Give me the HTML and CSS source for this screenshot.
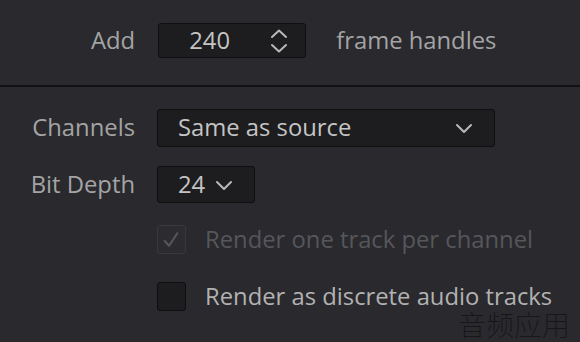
FILE: index.html
```html
<!DOCTYPE html>
<html lang="en">
<head>
<meta charset="utf-8">
<link rel="stylesheet" href="styles.css">
</head>
<body>
<div class="panel">
  <div class="handles-row">
    <span class="label">Add</span>
    <div class="box spin">
      <span class="value">240</span>
      <svg class="spin-icon" width="18" height="28" viewBox="0 0 18 28">
        <path d="M2 10 L9 3.5 L16 10" fill="none" stroke="#b8b8b8" stroke-width="2" stroke-linecap="round" stroke-linejoin="round"/>
        <path d="M2 18 L9 24.5 L16 18" fill="none" stroke="#b8b8b8" stroke-width="2" stroke-linecap="round" stroke-linejoin="round"/>
      </svg>
    </div>
    <span class="label">frame handles</span>
  </div>
  <div class="separator"></div>
  <div class="form">
    <span class="label right">Channels</span>
    <div class="box select wide">
      <span class="value">Same as source</span>
      <svg class="chev" width="18" height="12" viewBox="0 0 18 12">
        <path d="M2 3 L9 10 L16 3" fill="none" stroke="#b8b8b8" stroke-width="2" stroke-linecap="round" stroke-linejoin="round"/>
      </svg>
    </div>
    <span class="label right">Bit Depth</span>
    <div class="box select narrow">
      <span class="value">24</span>
      <svg class="chev" width="18" height="12" viewBox="0 0 18 12">
        <path d="M2 3 L9 10 L16 3" fill="none" stroke="#b8b8b8" stroke-width="2" stroke-linecap="round" stroke-linejoin="round"/>
      </svg>
    </div>
    <span></span>
    <div class="check-row disabled first">
      <span class="checkbox checked">
        <svg width="28" height="28" viewBox="0 0 28 28">
          <path d="M7 15 L11.5 20 L20 7" fill="none" stroke="#55555a" stroke-width="2.2" stroke-linecap="round" stroke-linejoin="round"/>
        </svg>
      </span>
      <span class="check-label">Render one track per channel</span>
    </div>
    <span></span>
    <div class="check-row second">
      <span class="checkbox"></span>
      <span class="check-label">Render as discrete audio tracks</span>
    </div>
  </div>
  <div class="watermark">音频应用</div>
</div>
</body>
</html>
```

FILE: styles.css
```css
html, body {
  margin: 0;
  padding: 0;
  background: #29292e;
}
.panel {
  width: 580px;
  height: 342px;
  position: relative;
  overflow: hidden;
  font-family: "Open Sans", "Liberation Sans", sans-serif;
  font-size: 23.8px;
  color: #a6a6a6;
}
.handles-row {
  display: flex;
  align-items: center;
  padding: 23px 0 0 91px;
  height: 35px;
}
.handles-row .box {
  margin: 0 30px 0 23px;
}
.label {
  color: #a4a4a4;
  line-height: 1;
  white-space: nowrap;
}
.box {
  box-sizing: border-box;
  background: #1d1d1f;
  border: 1.5px solid #0f0f10;
  border-radius: 3px;
  display: flex;
  align-items: center;
}
.value {
  color: #c4c4c4;
  line-height: 1;
}
.spin {
  width: 148px;
  height: 35px;
  padding-left: 30px;
}
.spin-icon {
  margin-left: auto;
  margin-right: 17px;
}
.separator {
  height: 2px;
  background: #111113;
  margin-top: 27px;
}
.form {
  display: grid;
  grid-template-columns: 135px auto;
  column-gap: 22px;
  row-gap: 19px;
  align-items: center;
  justify-items: start;
  padding-top: 22px;
}
.right {
  justify-self: end;
}
.select {
  height: 38px;
  padding-left: 20px;
}
.wide {
  width: 338px;
}
.wide .chev {
  margin-left: auto;
  margin-right: 21px;
}
.narrow {
  width: 98px;
  height: 37px;
}
.narrow .chev {
  margin-left: 10px;
}
.check-row {
  display: flex;
  align-items: center;
  gap: 19px;
}
.check-row.first {
  margin-top: 3px;
}
.check-row.second {
  margin-top: 9px;
}
.checkbox {
  box-sizing: border-box;
  width: 29px;
  height: 29px;
  border-radius: 3px;
  background: #1d1d1f;
  border: 1.5px solid #0f0f10;
  display: flex;
  align-items: center;
  justify-content: center;
}
.checkbox.checked {
  background: #2b2b30;
  border: 1.5px solid #38383d;
}
.check-label {
  color: #b2b2b2;
  line-height: 1;
  white-space: nowrap;
}
.disabled .check-label {
  color: #56565b;
}
.watermark {
  position: absolute;
  left: 458px;
  top: 310px;
  font-family: "Noto Sans CJK SC", sans-serif;
  font-weight: 100;
  font-size: 28px;
  color: #131315;
  line-height: 1;
}
```
